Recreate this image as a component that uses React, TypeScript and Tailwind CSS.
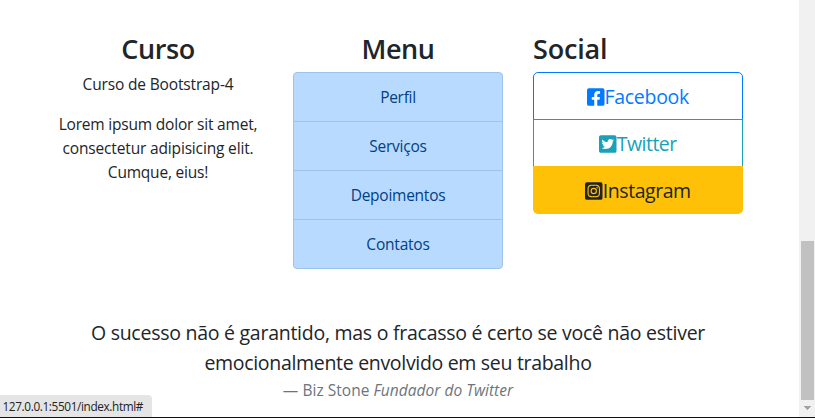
import { FaFacebookSquare, FaTwitterSquare, FaInstagramSquare } from "react-icons/fa";

const menu = [
  { label: "Perfil", spacing: "tracking-[-0.3px]" },
  { label: "Serviços", spacing: "tracking-[-0.25px]" },
  { label: "Depoimentos", spacing: "tracking-[-0.25px]" },
  { label: "Contatos", spacing: "tracking-[-0.2px]" },
];

export default function App() {
  return (
    <div className="relative flex h-[418px] w-[815px] overflow-hidden border-b border-[#111] bg-white font-['Open_Sans','Noto_Sans',sans-serif] text-[15.5px] font-[370] leading-6 text-[#212529]">
      <main className="flex flex-1 flex-col pl-[38px] pt-[30px]">
        <div className="grid h-[288px] w-[720px] grid-cols-3 items-start">
          <section className="px-[15px] text-center">
            <h3 className="mb-2 h-[34px] text-[27px] font-semibold leading-[37px] tracking-[-0.4px]">Curso</h3>
            <p className="mb-4 whitespace-nowrap tracking-[-0.15px]">Curso de Bootstrap-4</p>
            <p className="whitespace-nowrap tracking-[-0.2px]">Lorem ipsum dolor sit amet,</p>
            <p className="whitespace-nowrap tracking-[-0.16px]">consectetur adipisicing elit.</p>
            <p className="whitespace-nowrap tracking-[-0.2px]">Cumque, eius!</p>
          </section>
          <section className="px-[15px] text-center">
            <h3 className="mb-2 h-[34px] text-[27px] font-semibold leading-[37px] tracking-[-0.4px]">Menu</h3>
            <ul className="overflow-hidden rounded border border-[#9fc3e8] bg-[#b8daff] text-[#004085]">
              {menu.map((item) => (
                <li key={item.label} className="h-[49px] border-b border-[#9fc3e8] last:h-12 last:border-b-0">
                  <a href="#" className={`block h-12 leading-[49px] ${item.spacing}`}>{item.label}</a>
                </li>
              ))}
            </ul>
          </section>
          <section className="px-[15px]">
            <h3 className="mb-2 h-[34px] text-[27px] font-semibold leading-[37px] tracking-[-0.2px]">Social</h3>
            <div className="flex flex-col text-[19.5px]">
              <a href="#" className="flex h-12 items-center justify-center rounded-t-[5px] border border-[#007bff] pt-0.5 text-[#007bff]">
                <FaFacebookSquare className="h-5 w-[17.5px]" />
                <span className="tracking-[-0.3px]">Facebook</span>
              </a>
              <a href="#" className="-mt-px flex h-12 items-center justify-center border border-[#17a2b8] pt-0.5 text-[#17a2b8]">
                <FaTwitterSquare className="h-5 w-[17.5px]" />
                <span className="tracking-[-0.5px]">Twitter</span>
              </a>
              <a href="#" className="-mt-px flex h-12 items-center justify-center rounded-b-[5px] bg-[#ffc107] pt-0.5">
                <FaInstagramSquare className="h-5 w-[17.5px]" />
                <span className="tracking-[-0.45px]">Instagram</span>
              </a>
            </div>
          </section>
        </div>
        <blockquote className="w-[720px] whitespace-nowrap text-center text-[19.5px] leading-[30px]">
          <p className="tracking-[-0.26px]">O sucesso não é garantido, mas o fracasso é certo se você não estiver</p>
          <p className="tracking-[-0.31px]">emocionalmente envolvido em seu trabalho</p>
          <footer className="text-[15.5px] leading-6 tracking-[0.02px] text-[#6c757d]">
            — Biz Stone <cite>Fundador do Twitter</cite>
          </footer>
        </blockquote>
      </main>
      <div className="flex w-4 flex-col items-center bg-[#f1f1f1] pt-[241px]">
        <div className="h-[159px] w-[13px] bg-[#c1c1c1]" />
        <svg className="mt-1.5 h-1 w-[7px] fill-[#a3a3a3]" viewBox="0 0 7 4" shapeRendering="crispEdges">
          <path d="M0 0H7V1H6V2H5V3H4V4H3V3H2V2H1V1H0Z" />
        </svg>
      </div>
      <div className="absolute bottom-0 left-0 h-[22px] w-[152px] whitespace-nowrap rounded-tr bg-[#e5e5e5] pl-[2.5px] text-[11.8px] leading-[23px] tracking-[-0.38px] text-[#222]">
        127.0.0.1:5501/index.html#
      </div>
    </div>
  );
}
